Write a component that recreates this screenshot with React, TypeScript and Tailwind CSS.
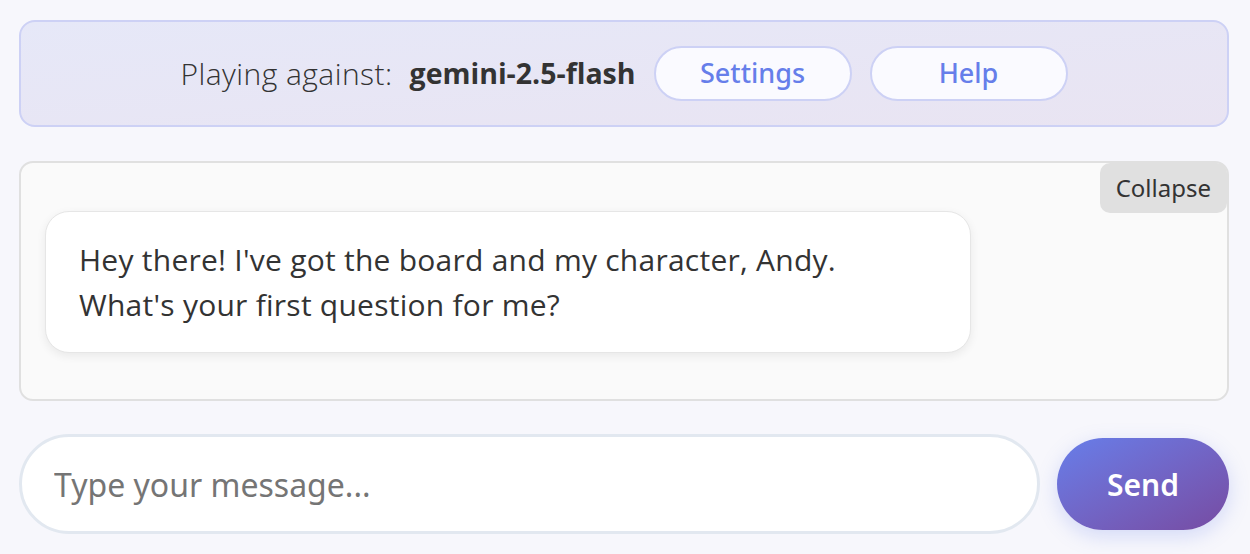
import React, { useState } from 'react';

const ubuntuLike = { fontFamily: '"Open Sans", "Noto Sans", sans-serif' };

const Header: React.FC<{ model: string }> = ({ model }) => {
  return (
    <div className="flex items-center justify-center gap-[18px] rounded-[16px] border-2 border-[#cdd1f5] bg-gradient-to-br from-[#e6e8f8] to-[#e9e4f2] py-[24px]">
      <div className="flex items-center text-[#333]" style={ubuntuLike}>
        <span className="text-[30px] font-light tracking-[0.45px]">Playing against:</span>
        <span className="ml-[17px] text-[28.5px] font-bold">{model}</span>
      </div>
      <button className="h-[55px] w-[198px] rounded-full border-2 border-[#cdd1f5] bg-[#fafaff] text-[27px] font-medium text-[#667eea]">
        Settings
      </button>
      <button className="h-[55px] w-[198px] rounded-full border-2 border-[#cdd1f5] bg-[#fafaff] text-[27px] font-medium text-[#667eea]">
        Help
      </button>
    </div>
  );
};

export default function App() {
  const [collapsed, setCollapsed] = useState(false);
  const [text, setText] = useState('');

  return (
    <div
      className="min-h-screen bg-[#f7f7fc] pl-[19px] pr-[21px] pt-[20px]"
      style={{ fontFamily: '"Noto Sans", sans-serif' }}
    >
      <Header model="gemini-2.5-flash" />

      {/* conversa */}
      <div className="relative mt-[34px] h-[240px] rounded-[14px] border-2 border-[#e0e0e0] bg-[#fafafa] px-[24px] pt-[48px]">
        <button
          onClick={() => setCollapsed(!collapsed)}
          className="absolute right-0 top-0 rounded-[10px] bg-[#e0e0e0] px-[16px] py-[10px] text-[24px] leading-[30px] text-[#333]"
        >
          Collapse
        </button>
        {!collapsed && (
          <div
            className="w-[80%] rounded-[24px] border border-[#e6e6e6] bg-white px-[33px] py-[25px] text-[30px] font-normal leading-[45px] tracking-[0.25px] text-[#333] shadow-[0_3px_10px_rgba(0,0,0,0.07)]"
            style={ubuntuLike}
          >
            Hey there! I've got the board and my character, Andy.
            <br />
            What's your first question for me?
          </div>
        )}
      </div>

      {/* entrada */}
      <div className="mt-[33px] flex items-center gap-[17px]">
        <input
          value={text}
          onChange={(e) => setText(e.target.value)}
          placeholder="Type your message..."
          className="h-[100px] flex-1 rounded-full border-[3px] border-[#e2e8f0] bg-white px-[32px] text-[32px] text-[#333] outline-none placeholder:text-[#757575]"
        />
        <button className="h-[92px] w-[172px] rounded-full bg-gradient-to-br from-[#667eea] to-[#764ba2] text-[30px] font-semibold text-white shadow-[0_6px_20px_rgba(102,126,234,0.25)]">
          Send
        </button>
      </div>
    </div>
  );
}
